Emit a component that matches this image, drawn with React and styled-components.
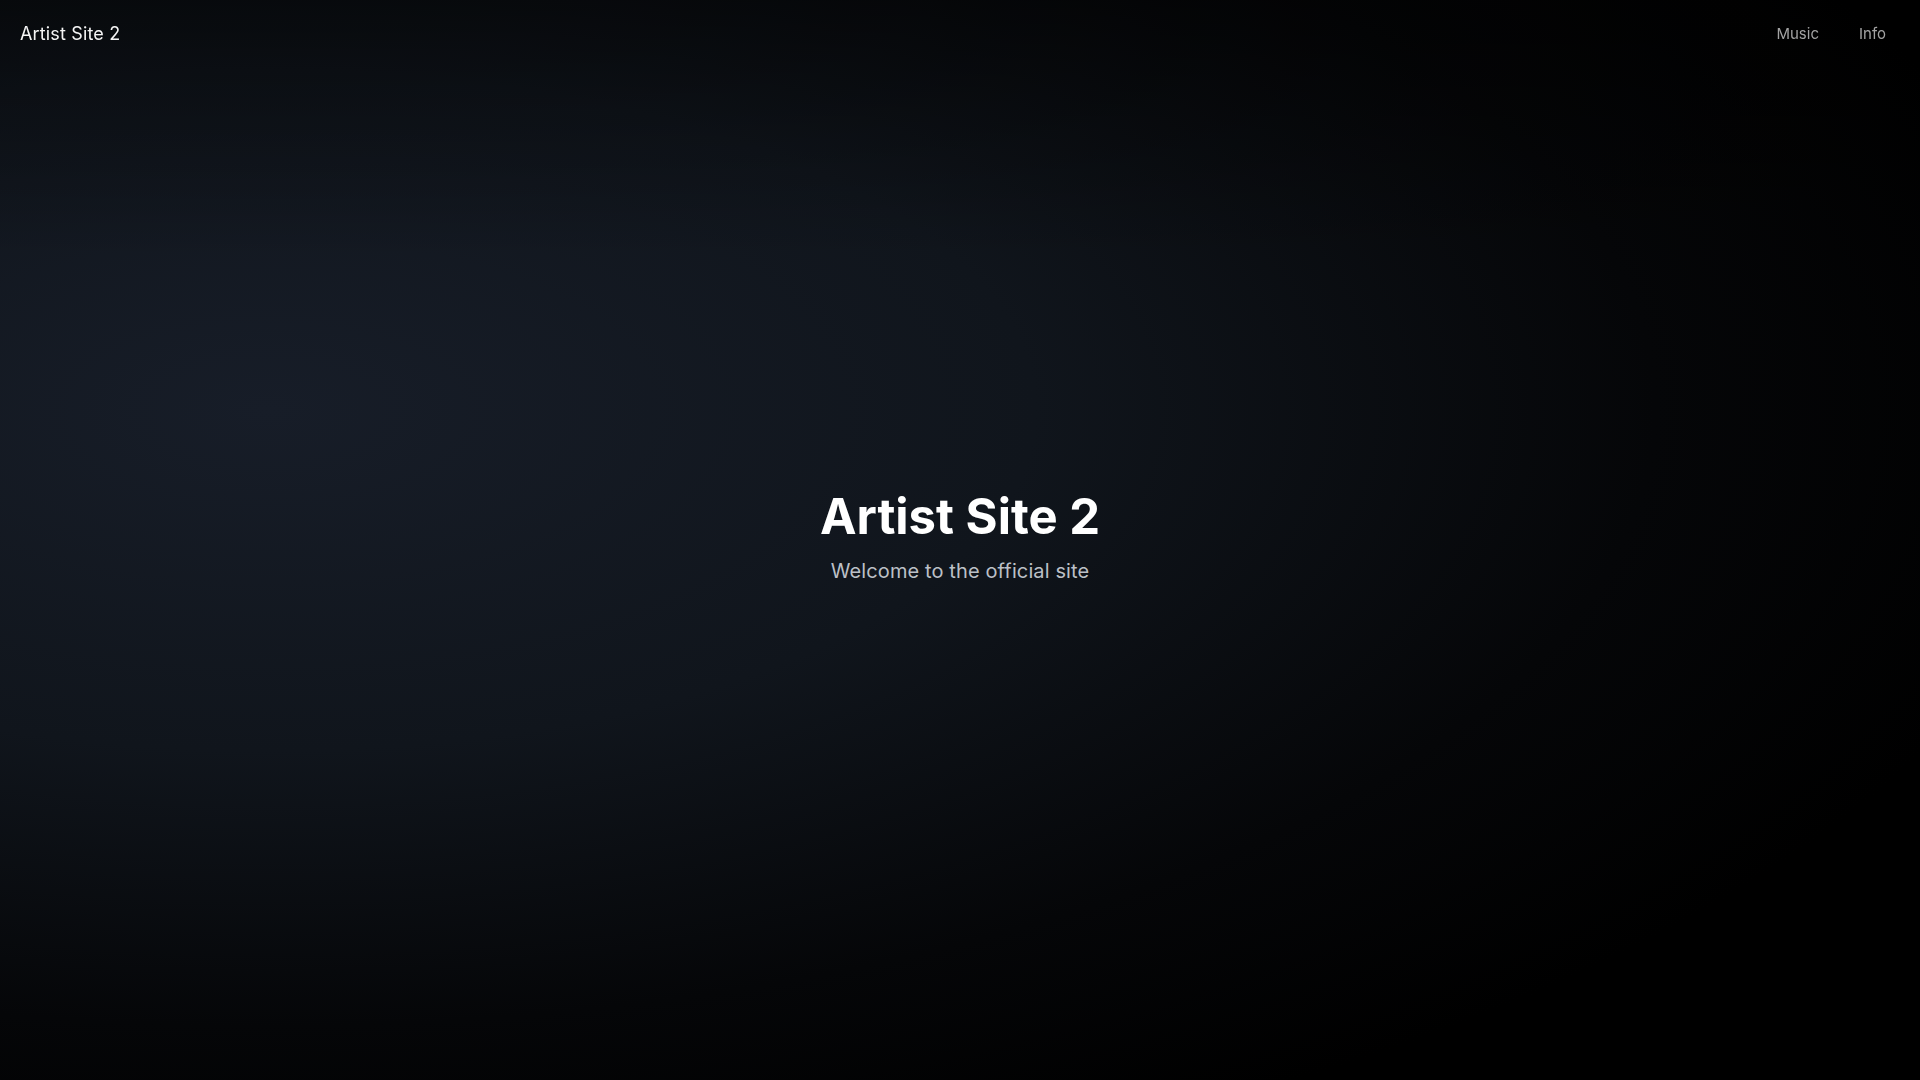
import React from "react";
import styled, { createGlobalStyle } from "styled-components";

const GlobalStyle = createGlobalStyle`
    html {
        scrollbar-width: thin;
        scrollbar-color: #141414 #000000;
    }
    html, body {
        margin: 0;
        padding: 0;
        background: #000000;
        font-family: "Inter", "Liberation Sans", sans-serif;
        color: #ffffff;
        overflow-x: hidden;
    }
`;

const Header = styled.header`
    position: fixed;
    top: 0;
    left: 0;
    width: 100vw;
    height: 66px;
    box-sizing: border-box;
    padding: 0 20px;
    display: flex;
    align-items: center;
    justify-content: space-between;
    z-index: 10;
`;

const Logo = styled.a`
    font-size: 18px;
    letter-spacing: 0.15px;
    color: #f5f5f5;
    text-decoration: none;
`;

const Nav = styled.nav`
    display: flex;
    gap: 12px;
    a {
        font-size: 15px;
        color: #a3a3a3;
        text-decoration: none;
        padding: 8px 14px;
    }
`;

const Hero = styled.section`
    width: 100vw;
    height: 100vh;
    box-sizing: border-box;
    padding-bottom: 6px;
    display: flex;
    flex-direction: column;
    align-items: center;
    justify-content: center;
    background:
        linear-gradient(to bottom, rgba(0, 0, 0, 0.45) 0%, rgba(0, 0, 0, 0) 24%),
        radial-gradient(ellipse 95% 75% at 14% 38%, #171d28 0%, #10151c 42%, #050608 76%, #000000 100%);
`;

const Title = styled.h1`
    margin: 0;
    font-size: 49px;
    font-weight: 700;
    line-height: 1.18;
    color: #ffffff;
`;

const Subtitle = styled.p`
    margin: 10px 0 0;
    font-size: 20px;
    letter-spacing: 0.12px;
    line-height: 1.5;
    color: #bcc0c7;
`;

const Footer = styled.footer`
    height: 84px;
    background: #000000;
`;

export default function App() {
    return (
        <>
            <GlobalStyle />
            <Header>
                <Logo href="#">Artist Site 2</Logo>
                <Nav>
                    <a href="#">Music</a>
                    <a href="#">Info</a>
                </Nav>
            </Header>
            <Hero>
                <Title>Artist Site 2</Title>
                <Subtitle>Welcome to the official site</Subtitle>
            </Hero>
            <Footer />
        </>
    );
}
